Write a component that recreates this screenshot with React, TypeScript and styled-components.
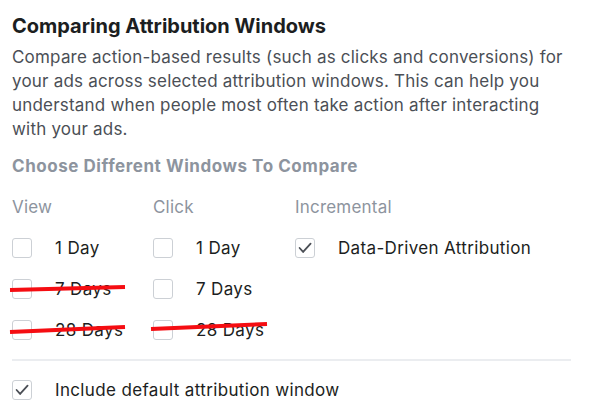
import React from "react";
import styled, { createGlobalStyle } from "styled-components";

const GlobalStyle = createGlobalStyle`
  html, body { margin: 0; padding: 0; background: #ffffff; }
  body { font-family: Inter, "Liberation Sans", Arial, sans-serif; -webkit-font-smoothing: antialiased; }
`;

const Panel = styled.div`
  width: 600px;
  height: 410px;
  box-sizing: border-box;
  padding: 13px 29px 0 12px;
  overflow: hidden;
`;

const Title = styled.h2`
  margin: 0;
  font-size: 20px;
  line-height: 26px;
  font-weight: 700;
  color: #1c1e21;
`;

const Description = styled.p`
  margin: 6px 0 0;
  font-size: 17px;
  line-height: 24px;
  letter-spacing: 0.2px;
  color: #4b4f56;
`;

const SectionLabel = styled.h3`
  margin: 15px 0 0;
  font-size: 17px;
  line-height: 20px;
  letter-spacing: 0.55px;
  font-weight: 700;
  color: #8d949e;
`;

const OptionsGrid = styled.div`
  display: grid;
  grid-template-columns: 141px 142px 1fr;
  grid-template-rows: 30px repeat(3, 41px);
  margin-top: 21px;
  align-items: center;
`;

const ColumnHeader = styled.div`
  align-self: start;
  font-size: 17px;
  line-height: 20px;
  letter-spacing: 0.2px;
  color: #8d949e;
`;

const HeaderRow = styled.div`
  display: contents;
`;

const Option = styled.label`
  position: relative;
  display: flex;
  align-items: center;
  gap: 23px;
  font-size: 17px;
  letter-spacing: 0.35px;
  color: #1c1e21;
  height: 20px;
`;

const Box = styled.span`
  box-sizing: border-box;
  width: 20px;
  height: 20px;
  flex: 0 0 20px;
  border: 1px solid #ccd0d5;
  border-radius: 3px;
  background: #ffffff;
  display: flex;
  align-items: center;
  justify-content: center;
`;

const Strike = styled.svg`
  position: absolute;
  left: -2px;
  top: 0;
  overflow: visible;
  pointer-events: none;
`;

const Divider = styled.hr`
  margin: 9px 0 0;
  border: none;
  border-top: 2px solid #ebedf0;
`;

const Footer = styled.div`
  padding-top: 19px;
`;

type StrikeSpec = { y1: number; y2: number; w: number };

const Check = () => (
  <svg width="20" height="20" viewBox="0 0 20 20">
    <path
      d="M4 10 L7.9 14.4 L16.2 5.2"
      fill="none"
      stroke="#4b4f56"
      strokeWidth="2"
      strokeLinecap="round"
      strokeLinejoin="round"
    />
  </svg>
);

const Checkbox: React.FC<{
  label: string;
  checked?: boolean;
  strike?: StrikeSpec;
}> = ({ label, checked, strike }) => (
  <Option>
    <Box>{checked && <Check />}</Box>
    <span>{label}</span>
    {strike && (
      <Strike width={strike.w} height={20}>
        <line
          x1="0"
          y1={strike.y1}
          x2={strike.w}
          y2={strike.y2}
          stroke="#f50d12"
          strokeWidth="4"
        />
      </Strike>
    )}
  </Option>
);

export default function App() {
  return (
    <>
      <GlobalStyle />
      <Panel>
        <Title>Comparing Attribution Windows</Title>
        <Description>
          Compare action-based results (such as clicks and conversions) for
          <br />
          your ads across selected attribution windows. This can help you
          <br />
          understand when people most often take action after interacting
          <br />
          with your ads.
        </Description>
        <SectionLabel>Choose Different Windows To Compare</SectionLabel>
        <OptionsGrid>
          <HeaderRow>
            <ColumnHeader>View</ColumnHeader>
            <ColumnHeader>Click</ColumnHeader>
            <ColumnHeader>Incremental</ColumnHeader>
          </HeaderRow>

          <Checkbox label="1 Day" />
          <Checkbox label="1 Day" />
          <Checkbox label="Data-Driven Attribution" checked />

          <Checkbox label="7 Days" strike={{ y1: 11, y2: 8, w: 115 }} />
          <Checkbox label="7 Days" />
          <span />

          <Checkbox label="28 Days" strike={{ y1: 12, y2: 7, w: 115 }} />
          <Checkbox label="28 Days" strike={{ y1: 9, y2: 4, w: 116 }} />
          <span />
        </OptionsGrid>
        <Divider />
        <Footer>
          <Checkbox label="Include default attribution window" checked />
        </Footer>
      </Panel>
    </>
  );
}
